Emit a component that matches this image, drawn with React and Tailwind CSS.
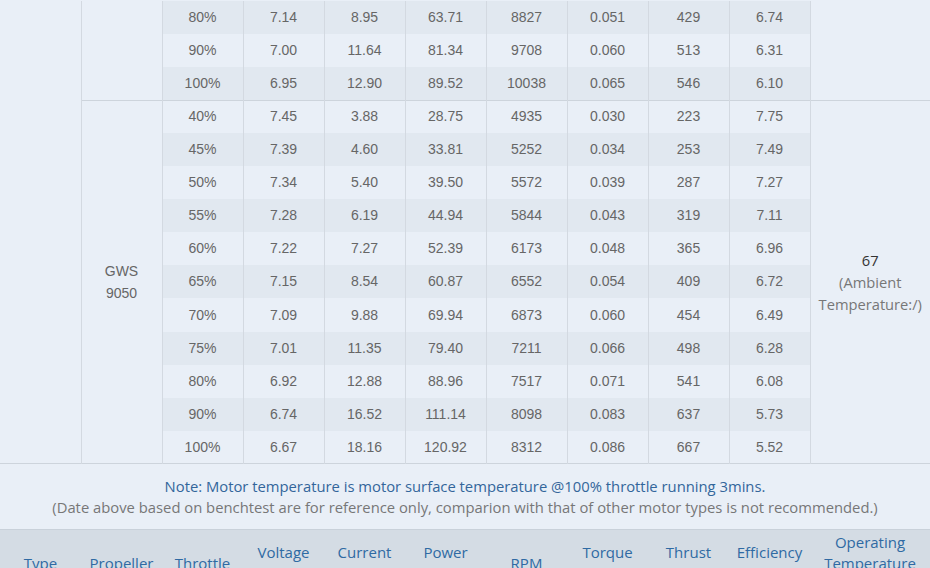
import React from "react";

const topRows = [
  ["80%", "7.14", "8.95", "63.71", "8827", "0.051", "429", "6.74"],
  ["90%", "7.00", "11.64", "81.34", "9708", "0.060", "513", "6.31"],
  ["100%", "6.95", "12.90", "89.52", "10038", "0.065", "546", "6.10"],
];

const gwsRows = [
  ["40%", "7.45", "3.88", "28.75", "4935", "0.030", "223", "7.75"],
  ["45%", "7.39", "4.60", "33.81", "5252", "0.034", "253", "7.49"],
  ["50%", "7.34", "5.40", "39.50", "5572", "0.039", "287", "7.27"],
  ["55%", "7.28", "6.19", "44.94", "5844", "0.043", "319", "7.11"],
  ["60%", "7.22", "7.27", "52.39", "6173", "0.048", "365", "6.96"],
  ["65%", "7.15", "8.54", "60.87", "6552", "0.054", "409", "6.72"],
  ["70%", "7.09", "9.88", "69.94", "6873", "0.060", "454", "6.49"],
  ["75%", "7.01", "11.35", "79.40", "7211", "0.066", "498", "6.28"],
  ["80%", "6.92", "12.88", "88.96", "7517", "0.071", "541", "6.08"],
  ["90%", "6.74", "16.52", "111.14", "8098", "0.083", "637", "5.73"],
  ["100%", "6.67", "18.16", "120.92", "8312", "0.086", "667", "5.52"],
];

const headers = [
  ["Type"],
  ["Propeller"],
  ["Throttle"],
  ["Voltage", "(V)"],
  ["Current", "(A)"],
  ["Power", "(W)"],
  ["RPM"],
  ["Torque", "(N*m)"],
  ["Thrust", "(g)"],
  ["Efficiency", "(g/W)"],
  ["Operating", "Temperature", "(℃)"],
];

function DataCells({ row, striped, tall }) {
  return row.map((v, i) => (
    <td
      key={i}
      className={`p-0 text-center border-x border-[#d3d9e1] ${tall ? "h-[33.08px]" : "h-[33px]"} ${
        striped ? "bg-[#e1e8f0]" : ""
      }`}
    >
      {v}
    </td>
  ));
}

export default function App() {
  return (
    <div className="w-[930px] h-[568px] overflow-hidden bg-[#e9eff7] pt-[1px]">
      <table
        className="w-[930px] table-fixed border-collapse text-[14px] text-[#666]"
        style={{ fontFamily: '"Liberation Sans", Arial, sans-serif' }}
      >
        <colgroup>
          {Array.from({ length: 10 }).map((_, i) => (
            <col key={i} className="w-[81px]" />
          ))}
          <col className="w-[120px]" />
        </colgroup>
        <tbody>
          {topRows.map((row, i) => (
            <tr key={"a" + i}>
              {i === 0 && <td rowSpan={14} className="p-0 border-r border-[#d3d9e1]" />}
              {i === 0 && <td rowSpan={3} className="p-0" />}
              <DataCells row={row} striped={i % 2 === 0} />
              {i === 0 && <td rowSpan={3} className="p-0" />}
            </tr>
          ))}
          {gwsRows.map((row, i) => (
            <tr key={"b" + i} className={i === 0 ? "border-t border-[#cdd4dc]" : ""}>
              {i === 0 && (
                <td rowSpan={11} className="p-0 text-center leading-[22px]">
                  GWS
                  <br />
                  9050
                </td>
              )}
              <DataCells row={row} striped={i % 2 === 1} tall />
              {i === 0 && (
                <td
                  rowSpan={11}
                  className="p-0 text-center text-[14.7px] leading-[22px] text-[#777]"
                  style={{ fontFamily: '"Open Sans", sans-serif' }}
                >
                  <span className="text-[#333]">67</span>
                  <br />
                  (Ambient
                  <br />
                  Temperature:/)
                </td>
              )}
            </tr>
          ))}
          <tr className="border-t border-[#cdd4dc]">
            <td
              colSpan={11}
              className="h-[66px] p-0 text-center text-[14.8px] leading-[21px]"
              style={{ fontFamily: '"Open Sans", sans-serif' }}
            >
              <div className="text-[#33669b]">
                Note: Motor temperature is motor surface temperature @100% throttle running 3mins.
              </div>
              <div className="text-[#777]">
                (Date above based on benchtest are for reference only, comparion with that of other motor types is not recommended.)
              </div>
            </td>
          </tr>
          <tr className="border-t border-[#c9d1da] bg-[#d4dce4]">
            {headers.map((h, i) => (
              <th
                key={i}
                className="h-[66px] p-0 text-center font-normal text-[15px] leading-[21px] text-[#2f6aa3]"
                style={{ fontFamily: '"Open Sans", sans-serif' }}
              >
                {h.map((line, j) => (
                  <div key={j}>{line}</div>
                ))}
              </th>
            ))}
          </tr>
        </tbody>
      </table>
    </div>
  );
}
